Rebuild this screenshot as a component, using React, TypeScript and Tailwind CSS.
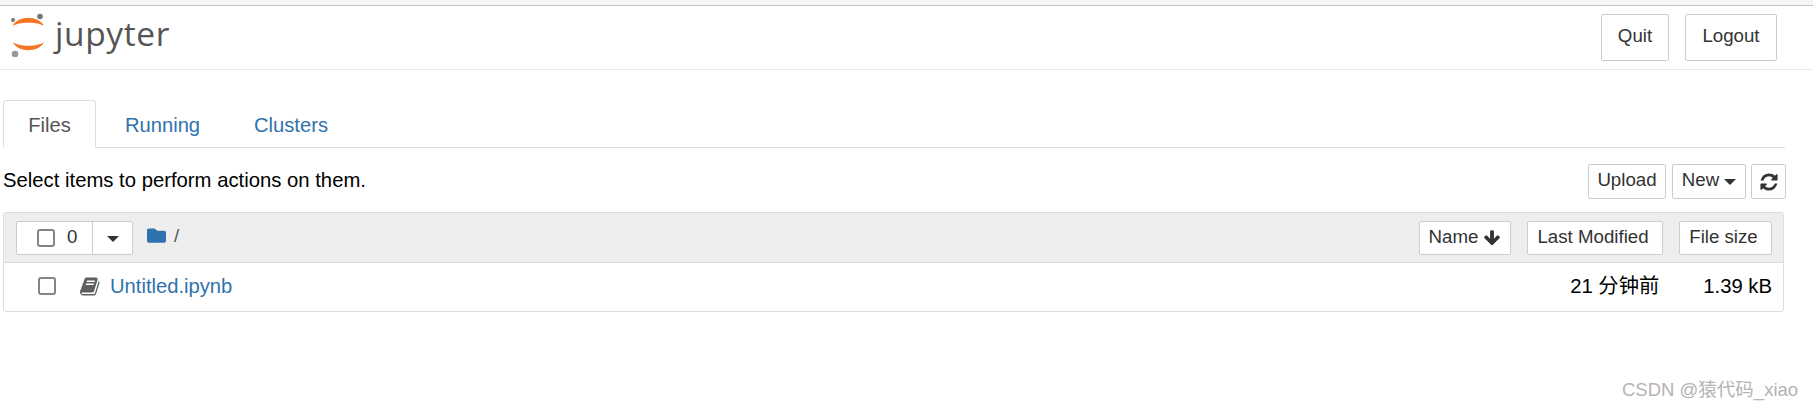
import React from "react";
import { FaFolder } from "react-icons/fa";

const btn = "flex items-center justify-center bg-white border border-[#cccccc] rounded-[2px] text-[#333333] text-[18.700px] leading-none";

function Logo() {
  return (
    <svg width="40" height="46" viewBox="0 0 40 46" className="shrink-0">
      <path d="M4.500 15 C10 4 31 4 36 15 C30 10.500 11 10.500 4.500 15Z" fill="#f37726" />
      <path d="M4.500 31 C10 42 31 42 36 31 C30 36 11 36 4.500 31Z" fill="#f37726" />
      <circle cx="5" cy="9" r="2" fill="#767677" />
      <circle cx="32" cy="5.500" r="2.800" fill="#767677" />
      <circle cx="7" cy="43" r="3.300" fill="#989798" />
    </svg>
  );
}

function BookIcon() {
  return (
    <svg width="21" height="21" viewBox="0 0 1792 1792" fill="#5f5f5f">
      <path d="M1639 478q40 57 18 129l-275 906q-19 64-76.500 107.500t-122.500 43.500h-923q-77 0-148.500-53.500t-99.500-131.500q-24-67-2-127 0-4 3-27t4-37q1-8-3-21.500t-3-19.500q2-11 8-21t16.500-23.500 16.500-23.500q23-38 45-91.500t30-91.500q3-10 .5-30t-.5-28q3-11 17-28t17-23q21-36 42-92t25-90q1-9-2.500-32t.5-28q4-13 22-30.500t22-22.500q19-26 42.500-84.500t27.500-96.500q1-8-3-25.500t-2-26.500q2-8 9-18t18-23 17-21q8-12 16.500-30.500t15-35 16-36 19.500-32 26.500-23.500 36-11.500 47.500 5.500l-1 3q38-9 51-9h761q74 0 114 56t18 130l-274 906q-36 119-71.500 153.500t-128.500 34.500h-869q-27 0-38 15-11 16-1 43 24 70 144 70h923q29 0 56-15.500t35-41.500l300-987q7-22 5-57 38 15 59 43zm-1064 2q-4 13 2 22.500t20 9.500h608q13 0 25.500-9.500t16.500-22.500l21-64q4-13-2-22.500t-20-9.500h-608q-13 0-25.500 9.500t-16.500 22.500zm-83 256q-4 13 2 22.500t20 9.500h608q13 0 25.500-9.500t16.500-22.500l21-64q4-13-2-22.500t-20-9.500h-608q-13 0-25.500 9.500t-16.500 22.500z" />
    </svg>
  );
}

function RefreshIcon() {
  return (
    <svg width="20" height="20" viewBox="0 0 1792 1792" fill="#333333">
      <path d="M1639 1056q0 5-1 7-64 268-268 434.500t-478 166.500q-146 0-282.500-55t-243.500-157l-129 129q-19 19-45 19t-45-19-19-45v-448q0-26 19-45t45-19h448q26 0 45 19t19 45-19 45l-137 137q71 66 161 102t187 36q134 0 250-65t186-179q11-17 53-117 8-23 30-23h192q13 0 22.500 9.500t9.500 22.500zm25-800v448q0 26-19 45t-45 19h-448q-26 0-45-19t-19-45 19-45l138-138q-148-137-349-137-134 0-250 65t-186 179q-11 17-53 117-8 23-30 23h-199q-13 0-22.500-9.500t-9.500-22.500v-7q65-268 270-434.500t480-166.500q146 0 284 55.500t245 156.500l130-129q19-19 45-19t45 19 19 45z" />
    </svg>
  );
}

function ArrowDownIcon() {
  return (
    <svg width="18" height="18" viewBox="0 0 1792 1792" fill="#333333">
      <path d="M1675 832q0 53-37 90l-651 652q-39 37-91 37-53 0-90-37l-651-652q-38-36-38-90 0-53 38-91l74-75q39-37 91-37 53 0 90 37l294 294v-704q0-52 38-90t90-38h128q52 0 90 38t38 90v704l294-294q37-37 90-37 52 0 91 37l75 75q37 39 37 91z" />
    </svg>
  );
}

function Caret() {
  return <span className="inline-block w-0 h-0 mt-[3px] border-x-[6px] border-x-transparent border-t-[6px] border-t-[#333333]" />;
}

function Check() {
  return <span className="block w-[18px] h-[18px] bg-white border-2 border-[#858585] rounded-[3px]" />;
}

export default function App() {
  return (
    <div className="relative w-[1813px] h-[408px] overflow-hidden bg-white text-black text-[18px] font-['Liberation_Sans','Noto_Sans_CJK_SC',sans-serif]">
      <div className="h-[6px] bg-[#f5f5f5] border-b border-[#c4c4c4]" />

      <header className="h-[64px] border-b border-[#e7e7e7] flex items-start justify-between pl-[8px] pr-[36px]">
        <div className="flex items-center h-[50px] mt-[3px]">
          <Logo />
          <span className="ml-[7px] text-[33.500px] leading-none tracking-[0.600px] font-medium text-[#555555] font-['Open_Sans',sans-serif]">jupyter</span>
        </div>
        <div className="flex gap-[16px] mt-[8px]">
          <button className={`${btn} w-[68px] h-[47px] pb-[2px]`}>Quit</button>
          <button className={`${btn} w-[92px] h-[47px] pb-[2px]`}>Logout</button>
        </div>
      </header>

      <main className="pl-[3px] pr-[28px]">
        <nav className="mt-[30px] h-[48px] border-b border-[#dddddd] flex text-[20.200px] leading-none">
          <div className="w-[93px] h-[48px] pt-[2px] flex items-center justify-center bg-white border border-[#dddddd] border-b-white rounded-t-[3px] text-[#555555]">Files</div>
          <div className="w-[133px] h-[47px] pt-[3px] flex items-center justify-center text-[#2f72ad]">Running</div>
          <div className="w-[124px] h-[47px] pt-[3px] flex items-center justify-center text-[#2f72ad]">Clusters</div>
        </nav>

        <div className="mt-[16px] -mr-[1px] h-[35px] flex items-center justify-between">
          <span className="text-[20.300px] leading-none pb-[2px]">Select items to perform actions on them.</span>
          <div className="flex">
            <button className={`${btn} w-[78px] h-[35px] pb-[2px]`}>Upload</button>
            <button className={`${btn} w-[74px] h-[35px] pb-[2px] ml-[6px] gap-[5px]`}>New <Caret /></button>
            <button className={`${btn} w-[35px] h-[35px] ml-[5px]`}><RefreshIcon /></button>
          </div>
        </div>

        <section className="mt-[13px] mr-[1px] h-[100px] border border-[#dddddd] rounded-[3px] overflow-hidden">
          <div className="h-[50px] bg-[#eeeeee] border-b border-[#dddddd] flex items-center pl-[12px] pr-[11px]">
            <div className="flex h-[34px] bg-white border border-[#cccccc] rounded-[2px]">
              <div className="w-[76px] flex items-center pl-[20px] gap-[12px] border-r border-[#cccccc]">
                <Check />
                <span className="text-[#333333] text-[18.700px]">0</span>
              </div>
              <div className="w-[39px] flex items-center justify-center"><Caret /></div>
            </div>
            <FaFolder className="ml-[14px] mb-[5px] text-[#2f72ad]" size={19} />
            <span className="ml-[8px] mb-[3px] text-[#555555] text-[18.700px]">/</span>
            <div className="ml-auto flex gap-[16px]">
              <button className={`${btn} w-[92px] h-[34px] gap-[5px]`}>Name <ArrowDownIcon /></button>
              <button className={`${btn} w-[136px] h-[34px] pr-[4px]`}>Last Modified</button>
              <button className={`${btn} w-[93px] h-[34px] pr-[4px]`}>File size</button>
            </div>
          </div>
          <div className="h-[48px] flex items-center pl-[34px] pr-[11px] pb-[2px]">
            <Check />
            <span className="ml-[24px]"><BookIcon /></span>
            <span className="ml-[9px] text-[20.200px] leading-none text-[#2f72ad]">Untitled.ipynb</span>
            <span className="ml-auto text-[20.300px] leading-none">21 分钟前</span>
            <span className="ml-[44px] text-[20.300px] leading-none">1.39 kB</span>
          </div>
        </section>
      </main>

      <div className="absolute left-[1622px] top-[378px] text-[18.500px] leading-[24px] text-[#b3b3b3] whitespace-nowrap">CSDN @猿代码_xiao</div>
    </div>
  );
}
